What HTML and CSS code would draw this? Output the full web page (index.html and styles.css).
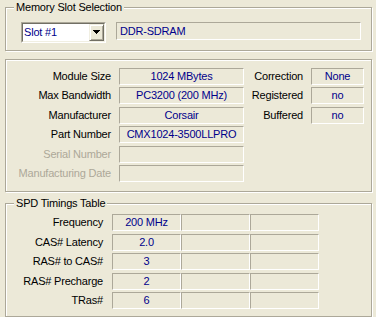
FILE: index.html
```html
<!DOCTYPE html>
<html>
<head>
<meta charset="utf-8">
<link rel="stylesheet" href="styles.css">
</head>
<body>
<div class="window">
  <section class="group group-slot">
    <span class="group-title">Memory Slot Selection</span>
    <div class="slot-row">
      <div class="combo">
        <div class="combo-inner">
          <span class="combo-text">Slot #1</span>
          <span class="combo-btn">
            <svg class="arrow" width="7" height="4" viewBox="0 0 7 4"><path d="M0 0h7v1H0zM1 1h5v1H1zM2 2h3v1H2zM3 3h1v1H3z" fill="#000"/></svg>
          </span>
        </div>
      </div>
      <div class="field field-type">DDR-SDRAM</div>
    </div>
  </section>

  <section class="group group-module">
    <div class="module-grid">
      <span class="label left">Module Size</span>
      <span class="field left-field">1024 MBytes</span>
      <span class="label right">Correction</span>
      <span class="field">None</span>

      <span class="label left">Max Bandwidth</span>
      <span class="field left-field">PC3200 (200 MHz)</span>
      <span class="label right">Registered</span>
      <span class="field">no</span>

      <span class="label left">Manufacturer</span>
      <span class="field left-field">Corsair</span>
      <span class="label right">Buffered</span>
      <span class="field">no</span>

      <span class="label left">Part Number</span>
      <span class="field left-field">CMX1024-3500LLPRO</span>

      <span class="label left disabled">Serial Number</span>
      <span class="field left-field"></span>

      <span class="label left disabled">Manufacturing Date</span>
      <span class="field left-field"></span>
    </div>
  </section>

  <section class="group group-spd">
    <span class="group-title">SPD Timings Table</span>
    <div class="spd-grid">
      <span class="label spd-label">Frequency</span>
      <span class="field">200 MHz</span><span class="field"></span><span class="field"></span>
      <span class="label spd-label">CAS# Latency</span>
      <span class="field">2.0</span><span class="field"></span><span class="field"></span>
      <span class="label spd-label">RAS# to CAS#</span>
      <span class="field">3</span><span class="field"></span><span class="field"></span>
      <span class="label spd-label">RAS# Precharge</span>
      <span class="field">2</span><span class="field"></span><span class="field"></span>
      <span class="label spd-label">TRas#</span>
      <span class="field">6</span><span class="field"></span><span class="field"></span>
    </div>
  </section>
</div>
</body>
</html>
```

FILE: styles.css
```css
html, body {
  margin: 0;
  padding: 0;
}

body {
  width: 376px;
  height: 317px;
  overflow: hidden;
  background: #ECE9D8;
  font-family: "Liberation Sans", Arial, sans-serif;
  font-size: 11px;
  line-height: 13px;
  letter-spacing: -0.2px;
  color: #000;
}

.window {
  display: flex;
  flex-direction: column;
  padding: 7px 0 0 5px;
}

.group {
  position: relative;
  box-sizing: border-box;
  width: 367px;
  border: 1px solid #ACA899;
  box-shadow: inset 1px 1px 0 #fff, 1px 1px 0 #fff;
}

.group-title {
  position: absolute;
  top: -7px;
  left: 8px;
  padding: 0 2px;
  background: #ECE9D8;
  white-space: nowrap;
}

.group-slot {
  height: 44px;
  padding: 14px 0 0 15px;
}

.group-module {
  height: 133px;
  margin-top: 8px;
  padding-top: 8px;
}

.group-spd {
  height: 114px;
  margin-top: 11px;
  padding-top: 10px;
}

/* slot selection */
.slot-row {
  display: flex;
  align-items: flex-start;
  gap: 10px;
}

.combo {
  box-sizing: border-box;
  width: 85px;
  height: 21px;
  border: 1px solid;
  border-color: #ACA899 #fff #fff #ACA899;
}

.combo-inner {
  box-sizing: border-box;
  height: 100%;
  display: flex;
  align-items: stretch;
  border: 1px solid;
  border-color: #716F64 #F1EFE2 #F1EFE2 #716F64;
  background: #fff;
}

.combo-text {
  flex: 1;
  padding-left: 1px;
  line-height: 17px;
  color: #00008B;
  white-space: nowrap;
}

.combo-btn {
  box-sizing: border-box;
  width: 15px;
  display: flex;
  align-items: center;
  justify-content: center;
  background: #ECE9D8;
  border: 1px solid;
  border-color: #F1EFE2 #716F64 #716F64 #F1EFE2;
  box-shadow: inset 1px 1px 0 #fff, inset -1px -1px 0 #ACA899;
}

.arrow {
  display: block;
  margin-bottom: 1px;
}

/* fields */
.field {
  box-sizing: border-box;
  display: block;
  height: 17px;
  line-height: 15px;
  border: 1px solid;
  border-color: #ACA899 #fff #fff #ACA899;
  text-align: center;
  color: #00008B;
  white-space: nowrap;
  overflow: hidden;
}

.field-type {
  width: 245px;
  height: 18px;
  line-height: 16px;
  text-align: left;
  padding-left: 3px;
}

.label {
  display: block;
  line-height: 17px;
  text-align: right;
  white-space: nowrap;
}

.label.disabled {
  color: #ACA899;
}

/* module info */
.module-grid {
  display: grid;
  grid-template-columns: 113px 125px 67px 53px;
  grid-template-rows: 19px 20px 19px 20px 19px 17px;
  align-items: start;
}

.module-grid .label {
  padding-right: 8px;
}

.module-grid .left {
  grid-column: 1;
}

.module-grid .left-field {
  grid-column: 2;
}

/* spd table */
.spd-grid {
  display: grid;
  grid-template-columns: 106px 69px 69px 69px;
  grid-template-rows: 20px 19px 20px 19px 19px;
  align-items: start;
}

.spd-label {
  padding-right: 9px;
}
```
